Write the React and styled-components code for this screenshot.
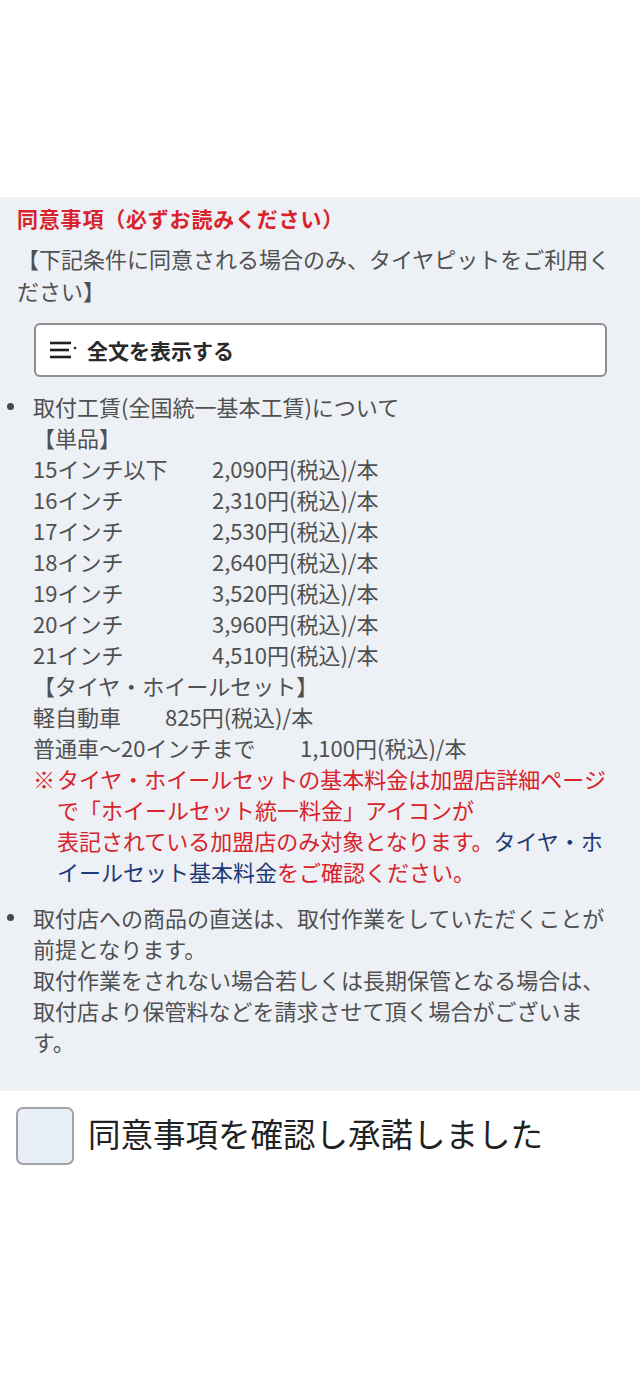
import React from "react";
import styled, { createGlobalStyle } from "styled-components";

const GlobalStyle = createGlobalStyle`
  html, body {
    margin: 0;
    padding: 0;
    background: #ffffff;
  }
  body {
    font-family: "Noto Sans CJK JP", "Noto Sans", sans-serif;
    color: #4f4f4f;
  }
  * { box-sizing: border-box; }
`;

const Page = styled.div`
  padding-top: 197px;
  min-height: 1387px;
  background: #ffffff;
`;

const Panel = styled.section`
  background: #edf0f5;
  padding: 6px 17px 34px 17px;
`;

const Title = styled.h2`
  margin: 0;
  font-size: 21px;
  line-height: 30px;
  font-weight: 700;
  letter-spacing: 0.8px;
  color: #d8232a;
`;

const Lead = styled.p`
  margin: 9px 0 0;
  font-size: 22px;
  line-height: 32px;
  color: #505050;
`;

const ExpandButton = styled.button`
  display: flex;
  align-items: center;
  gap: 10px;
  width: calc(100% - 33px);
  height: 54px;
  margin: 17px 16px 0 17px;
  padding: 0 0 0 13px;
  background: #ffffff;
  border: 2.5px solid #8e8e8e;
  border-radius: 6px;
  font-family: inherit;
  font-size: 21px;
  font-weight: 700;
  color: #2a2a2a;
  cursor: pointer;
`;

const List = styled.ul`
  list-style: none;
  margin: 14px 0 0 -11px;
  padding: 0;
`;

const Item = styled.li`
  display: grid;
  grid-template-columns: 27px 1fr;
  font-size: 22px;
  line-height: 31px;
  color: #505050;
  & + & {
    margin-top: 15px;
  }
`;

const Dot = styled.span`
  width: 7px;
  height: 7px;
  margin: 12px 0 0 1px;
  border-radius: 50%;
  background: #484848;
`;

const Line = styled.div`
  white-space: nowrap;
`;

const Label = styled.span`
  display: inline-block;
  width: ${(p) => p.$w}px;
`;

const Note = styled.div`
  display: grid;
  grid-template-columns: 24px 1fr;
  margin-right: 10px;
  color: #d8232a;
`;

const LinkText = styled.a`
  color: #1f3a78;
  text-decoration: none;
`;

const Agree = styled.label`
  display: flex;
  align-items: center;
  gap: 14px;
  margin: 16px 0 0 16px;
  cursor: pointer;
`;

const Box = styled.span`
  display: block;
  width: 58px;
  height: 58px;
  border: 2.5px solid #a2a2a2;
  border-radius: 7px;
  background: #e9eff8;
  flex: none;
`;

const AgreeText = styled.span`
  font-size: 32.5px;
  line-height: 44px;
  color: #222222;
  margin-top: -6px;
`;

const MenuIcon = () => (
  <svg width="28" height="18" viewBox="0 0 28 18" aria-hidden="true">
    <g stroke="#1f1f1f" strokeWidth="2.6" strokeLinecap="butt">
      <line x1="1" y1="2" x2="22" y2="2" />
      <line x1="1" y1="9" x2="20" y2="9" />
      <line x1="1" y1="16" x2="22" y2="16" />
    </g>
    <circle cx="26" cy="7" r="1.3" fill="#1f1f1f" />
  </svg>
);

const singles = [
  ["15インチ以下", "2,090円(税込)/本"],
  ["16インチ", "2,310円(税込)/本"],
  ["17インチ", "2,530円(税込)/本"],
  ["18インチ", "2,640円(税込)/本"],
  ["19インチ", "3,520円(税込)/本"],
  ["20インチ", "3,960円(税込)/本"],
  ["21インチ", "4,510円(税込)/本"],
];

export default function App() {
  return (
    <>
      <GlobalStyle />
      <Page>
        <Panel>
          <Title>同意事項（必ずお読みください）</Title>
          <Lead>【下記条件に同意される場合のみ、タイヤピットをご利用ください】</Lead>
          <ExpandButton type="button">
            <MenuIcon />
            全文を表示する
          </ExpandButton>
          <List>
            <Item>
              <Dot />
              <div>
                <Line>取付工賃(全国統一基本工賃)について</Line>
                <Line>【単品】</Line>
                {singles.map(([size, price]) => (
                  <Line key={size}>
                    <Label $w={179}>{size}</Label>
                    {price}
                  </Line>
                ))}
                <Line>【タイヤ・ホイールセット】</Line>
                <Line>
                  <Label $w={132}>軽自動車</Label>825円(税込)/本
                </Line>
                <Line>
                  <Label $w={267}>普通車〜20インチまで</Label>1,100円(税込)/本
                </Line>
                <Note>
                  <span>※</span>
                  <span>
                    タイヤ・ホイールセットの基本料金は加盟店詳細ページで「ホイールセット統一料金」アイコンが
                    <br />
                    表記されている加盟店のみ対象となります。
                    <LinkText href="#">タイヤ・ホイールセット基本料金</LinkText>
                    をご確認ください。
                  </span>
                </Note>
              </div>
            </Item>
            <Item>
              <Dot />
              <div>
                取付店への商品の直送は、取付作業をしていただくことが前提となります。
                <br />
                取付作業をされない場合若しくは長期保管となる場合は、
                <br />
                取付店より保管料などを請求させて頂く場合がございます。
              </div>
            </Item>
          </List>
        </Panel>
        <Agree>
          <Box />
          <AgreeText>同意事項を確認し承諾しました</AgreeText>
        </Agree>
      </Page>
    </>
  );
}
